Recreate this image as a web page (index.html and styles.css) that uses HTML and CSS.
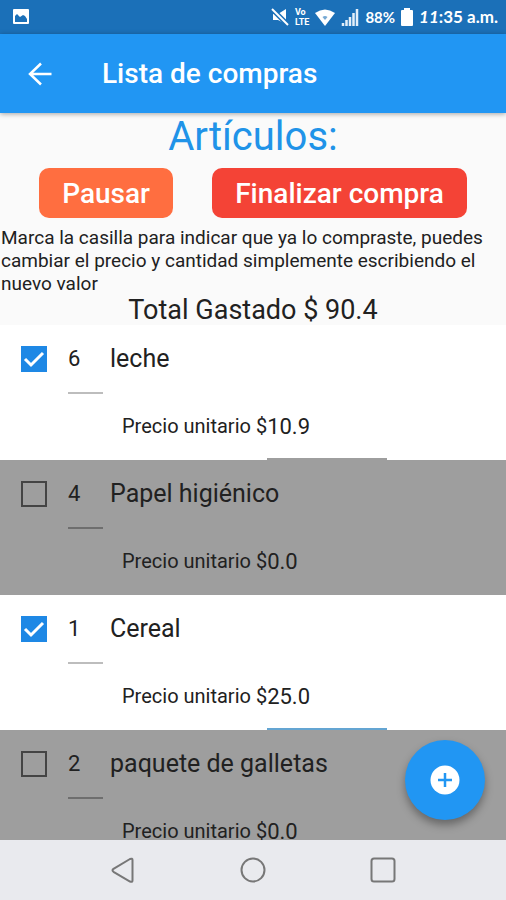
FILE: index.html
```html
<!DOCTYPE html>
<html lang="es">
<head>
<meta charset="utf-8">
<meta name="viewport" content="width=device-width, initial-scale=1">
<title>Lista de compras</title>
<link rel="stylesheet" href="styles.css">
</head>
<body>
<div class="status">
  <svg class="status-photo" width="18" height="18" viewBox="0 0 18 18" aria-hidden="true"><rect x="1" y="1" width="16" height="15" rx="1" fill="#fff"/><path d="M3 14V8l2-2 3 3 3-2 2 1 2 3v3z" fill="#1b70b8"/></svg>
  <div class="status-right">
    <svg width="18" height="18" viewBox="0 0 18 18" aria-hidden="true"><path d="M2 6h5l8-5v15l-8-4H2z" fill="#fff"/><path d="M1 1l16 16" stroke="#1b70b8" stroke-width="5"/><path d="M1 1l16 16" stroke="#fff" stroke-width="2"/></svg>
    <span class="volte"><span>Vo</span><span>LTE</span></span>
    <svg width="20" height="17" viewBox="0 0 20 17" aria-hidden="true"><path d="M0 4Q10-3 20 4L10 17z" fill="#fff"/><path d="M7.500 8q2.500-2 5 0L10 11z" fill="#1b70b8" opacity=".6"/></svg>
    <svg width="18" height="18" viewBox="0 0 18 18" aria-hidden="true"><path d="M2 18v-3M5.500 18v-6M9 18V9M12.500 18V5M16 18V1" stroke="#e3effa" stroke-width="2.500"/></svg>
    <span class="charge">88%</span>
    <svg width="12" height="18" viewBox="0 0 12 18" aria-hidden="true"><path d="M3 0h6v2h2q1 0 1 1v14q0 1-1 1H1q-1 0-1-1V3q0-1 1-1h2z" fill="#fff"/></svg>
    <span class="clock"><i>11</i>:35 a.m.</span>
  </div>
</div>

<header class="appbar">
  <button class="back" type="button" aria-label="Atrás"><svg width="24" height="24" viewBox="0 0 24 24" fill="none" stroke="#fff" stroke-width="2.500"><path d="M23.500 12H2M13 1.500L2 12l11 10.500"/></svg></button>
  <h1>Lista de compras</h1>
</header>

<main class="content">
  <h2>Artículos:</h2>
  <div class="actions">
    <button class="action pause" type="button">Pausar</button>
    <button class="action finish" type="button">Finalizar compra</button>
  </div>
  <p class="help">Marca la casilla para indicar que ya lo compraste, puedes cambiar el precio y cantidad simplemente escribiendo el nuevo valor</p>
  <p class="total">Total Gastado $ 90.4</p>

  <ul class="items">
    <li class="item">
      <div class="item-top">
        <input class="check" type="checkbox" id="c1" checked>
        <input class="qty" type="text" value="6" aria-label="Cantidad">
        <label class="name" for="c1">leche</label>
      </div>
      <div class="price"><label for="p1">Precio unitario $</label><input class="amount" type="text" id="p1" value="10.9"></div>
    </li>
    <li class="item pending">
      <div class="item-top">
        <input class="check" type="checkbox" id="c2">
        <input class="qty" type="text" value="4" aria-label="Cantidad">
        <label class="name" for="c2">Papel higiénico</label>
      </div>
      <div class="price"><label for="p2">Precio unitario $</label><input class="amount" type="text" id="p2" value="0.0"></div>
    </li>
    <li class="item">
      <div class="item-top">
        <input class="check" type="checkbox" id="c3" checked>
        <input class="qty" type="text" value="1" aria-label="Cantidad">
        <label class="name" for="c3">Cereal</label>
      </div>
      <div class="price"><label for="p3">Precio unitario $</label><input class="amount active" type="text" id="p3" value="25.0"></div>
    </li>
    <li class="item pending">
      <div class="item-top">
        <input class="check" type="checkbox" id="c4">
        <input class="qty" type="text" value="2" aria-label="Cantidad">
        <label class="name" for="c4">paquete de galletas</label>
      </div>
      <div class="price"><label for="p4">Precio unitario $</label><input class="amount" type="text" id="p4" value="0.0"></div>
    </li>
  </ul>
  <button class="fab" type="button" aria-label="Agregar artículo"><svg width="30" height="30" viewBox="0 0 30 30"><circle cx="15" cy="15" r="14.500" fill="#fff"/><path d="M15 8v14M8 15h14" stroke="#2196f3" stroke-width="2.500"/></svg></button>
</main>

<nav class="navbar">
  <button type="button" aria-label="Volver"><svg width="26" height="26" viewBox="0 0 26 26"><path d="M20 2L3.500 11.800q-2 1.500 0 3L20 24.500q2.500 1 2.500-1V3q0-2-2.500-1z"/></svg></button>
  <button type="button" aria-label="Inicio"><svg width="26" height="26" viewBox="0 0 26 26"><circle cx="13" cy="13" r="11.500"/></svg></button>
  <button type="button" aria-label="Recientes"><svg width="26" height="26" viewBox="0 0 26 26"><rect x="1.500" y="1.500" width="23" height="23" rx="2.500"/></svg></button>
</nav>
</body>
</html>
```
FILE: styles.css
```css
* {
  box-sizing: border-box;
}

body {
  margin: 0;
  height: 100vh;
  display: flex;
  flex-direction: column;
  overflow: hidden;
  font-family: Roboto, "Liberation Sans", sans-serif;
  color: #212121;
  background: #fafafa;
}

button {
  border: 0;
  padding: 0;
  background: none;
  font: inherit;
  cursor: pointer;
}

svg {
  display: block;
}

h1,
h2,
p,
ul {
  margin: 0;
  padding: 0;
}

.status {
  height: 34px;
  flex: none;
  display: flex;
  align-items: center;
  justify-content: space-between;
  padding: 0 8px 0 12px;
  background: #1b70b8;
  color: #fff;
}

.status-right {
  display: flex;
  align-items: center;
  gap: 6px;
}

.volte {
  display: flex;
  flex-direction: column;
  font-size: 9px;
  line-height: 10px;
  font-weight: 700;
}

.charge,
.clock {
  font-family: Lato, sans-serif;
  font-weight: 700;
  line-height: 20px;
}

.charge {
  font-size: 15px;
}

.clock {
  font-size: 17px;
}

.appbar {
  height: 79px;
  flex: none;
  display: flex;
  align-items: center;
  gap: 50px;
  padding: 0 28px;
  background: #2196f3;
  color: #fff;
  box-shadow: 0 1px 5px rgba(0, 0, 0, 0.35);
  z-index: 1;
}

.appbar h1 {
  font-size: 28px;
  line-height: 32px;
  font-weight: 500;
}

.content {
  position: relative;
  flex: 1;
  min-height: 0;
  overflow: hidden;
}

.content h2 {
  font-size: 40px;
  line-height: 47px;
  font-weight: 400;
  text-align: center;
  color: #2093e8;
}

.actions {
  display: flex;
  justify-content: space-evenly;
  padding: 8px 0;
}

.action {
  height: 50px;
  padding: 0 23px;
  border-radius: 10px;
  font-size: 28px;
  font-weight: 500;
  color: #fff;
}

.pause {
  background: #ff6e40;
}

.finish {
  background: #f44336;
}

.help {
  padding-left: 1px;
  font-size: 19px;
  line-height: 23px;
}

.total {
  font-size: 27px;
  line-height: 30px;
  text-align: center;
}

.items {
  list-style: none;
}

.item {
  height: 135px;
  background: #fff;
}

.pending {
  background: #9e9e9e;
}

.item-top {
  display: flex;
  align-items: flex-start;
  height: 69px;
  padding-left: 21px;
}

.check {
  appearance: none;
  width: 26px;
  height: 26px;
  margin: 21px 21px 0 0;
  border: 2px solid #444;
}

.check:checked {
  border: 0;
  background: #1e88e5 url("data:image/svg+xml,%3Csvg xmlns='http://www.w3.org/2000/svg' viewBox='0 0 26 26'%3E%3Cpath d='M4 13l6 6L22 7' fill='none' stroke='white' stroke-width='3'/%3E%3C/svg%3E");
}

.qty,
.amount {
  border: 0;
  border-radius: 0;
  outline: 0;
  padding: 0;
  background: none;
  font: inherit;
  font-size: 22px;
  color: inherit;
}

.qty {
  width: 35px;
  height: 69px;
  border-bottom: 2px solid #bdbdbd;
}

.pending .qty {
  border-color: #6e6e6e;
}

.name {
  margin: 18px 0 0 7px;
  font-size: 25px;
  line-height: 32px;
}

.price {
  display: flex;
  align-items: center;
  height: 66px;
  padding: 0 0 2px 122px;
  font-size: 20px;
}

.amount {
  width: 120px;
  height: 66px;
  margin-bottom: -2px;
  border-bottom: 2px solid #9e9e9e;
}

.amount.active {
  border-color: #64a5d2;
}

.fab {
  position: absolute;
  right: 21px;
  bottom: 20px;
  width: 80px;
  height: 80px;
  display: grid;
  place-items: center;
  border-radius: 50%;
  background: #2196f3;
  box-shadow: 0 5px 9px rgba(0, 0, 0, 0.35);
}

.navbar {
  height: 60px;
  flex: none;
  display: flex;
  align-items: center;
  justify-content: center;
  gap: 104px;
  background: #e9eaee;
}

.navbar svg {
  fill: none;
  stroke: #777;
  stroke-width: 2;
}
```
